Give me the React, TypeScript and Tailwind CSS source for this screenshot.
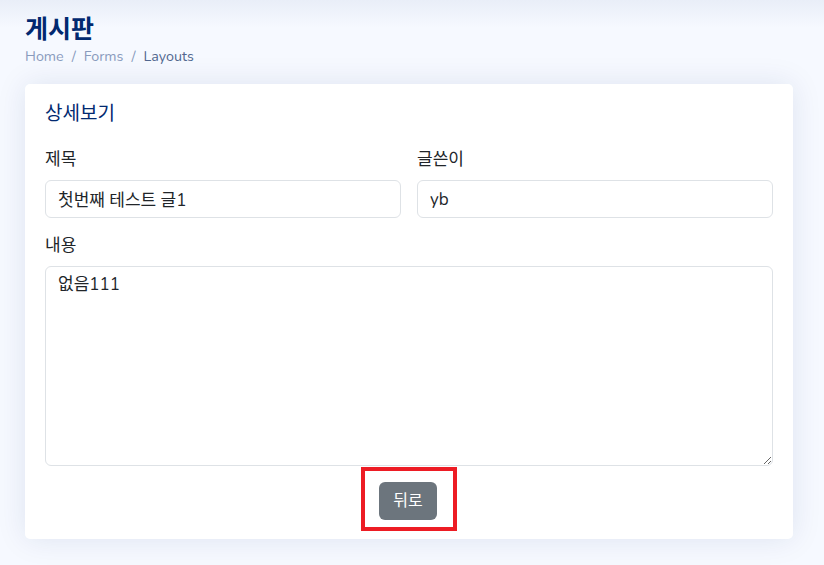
import React from 'react';

const font = { fontFamily: '"Nunito", "Open Sans", "Noto Sans CJK KR", sans-serif' };

export default function App() {
  return (
    <div
      className="min-h-[565px] w-full bg-[#f6f9ff] bg-gradient-to-b from-[#e9eef8] to-[#f6f9ff] bg-[length:100%_28px] bg-no-repeat pl-[25px] pr-[31px] pt-[14px] pb-[25px] text-[#212529]"
      style={font}
    >
      {/* 페이지 제목 */}
      <h1 className="text-[25px] font-bold leading-[32px] text-[#012970]">게시판</h1>
      <nav className="mt-[1px] flex items-center gap-[8px] text-[14.3px] leading-[20px] text-[#899bbd]">
        <span>Home</span>
        <span>/</span>
        <span>Forms</span>
        <span>/</span>
        <span className="text-[#51678f]">Layouts</span>
      </nav>

      {/* 카드 */}
      <section className="mt-[17px] rounded-[5px] bg-white px-[20px] pt-[18px] pb-[8px] shadow-[0_0_30px_rgba(1,41,112,0.1)]">
        <h5 className="text-[19px] leading-[24px] text-[#012970]">상세보기</h5>

        <div className="mt-[23px] grid grid-cols-2 gap-[16px]">
          <div>
            <label className="block text-[17px] leading-[22px]">제목</label>
            <input
              readOnly
              value="첫번째 테스트 글1"
              className="mt-[9px] h-[38px] w-full rounded-[6px] border border-[#dee2e6] px-[12px] text-[17px] outline-none"
            />
          </div>
          <div>
            <label className="block text-[17px] leading-[22px]">글쓴이</label>
            <input
              readOnly
              value="yb"
              className="mt-[9px] h-[38px] w-full rounded-[6px] border border-[#dee2e6] px-[12px] text-[17px] outline-none"
            />
          </div>
        </div>

        <div className="mt-[17px]">
          <label className="block text-[17px] leading-[22px]">내용</label>
          <textarea
            readOnly
            value="없음111"
            className="mt-[9px] block h-[200px] w-full rounded-[6px] border border-[#dee2e6] px-[12px] py-[6px] text-[17px] leading-[24px] outline-none"
          />
        </div>

        {/* 버튼 (빨간 표시) */}
        <div className="mt-[1px] flex justify-center">
          <div className="border-[4px] border-[#ed1c24] pt-[11px] pr-[16px] pb-[7px] pl-[14px]">
            <button className="h-[38px] w-[58px] rounded-[6px] bg-[#6c757d] text-[16px] text-white">뒤로</button>
          </div>
        </div>
      </section>
    </div>
  );
}
